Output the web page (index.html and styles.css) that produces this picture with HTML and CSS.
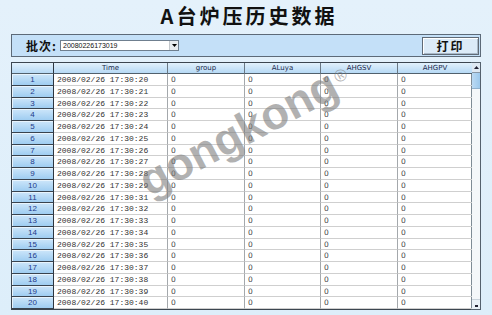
FILE: index.html
```html
<!DOCTYPE html>
<html>
<head>
<meta charset="utf-8">
<link rel="stylesheet" href="styles.css">
</head>
<body>
<div class="page">
  <h1 class="title">A台炉压历史数据</h1>
  <div class="toolbar">
    <span class="batch-label">批次:</span>
    <div class="select"><span class="select-text">20080226173019</span><span class="select-btn"><svg width="5" height="3" viewBox="0 0 5 3"><path d="M0 0H5L2.5 3Z" fill="#000"/></svg></span></div>
    <button class="print-btn">打印</button>
  </div>
  <div class="grid-wrap">
    <div class="grid" id="grid">
      <div class="hd rn"></div>
      <div class="hd">Time</div>
      <div class="hd">group</div>
      <div class="hd">ALuya</div>
      <div class="hd">AHGSV</div>
      <div class="hd">AHGPV</div>
    </div>
    <div class="scrollbar">
      <div class="sb-btn"><svg width="5" height="3" viewBox="0 0 5 3"><path d="M0 3H5L2.5 0Z" fill="#223"/></svg></div>
      <div class="sb-thumb"></div>
      <div class="sb-track"></div>
      <div class="sb-btn sb-bottom"><svg width="3" height="2" viewBox="0 0 3 2"><rect width="3" height="2" fill="#223"/></svg></div>
    </div>
  </div>
  <div class="watermark">gongkong<span class="reg">®</span></div>
</div>
<script>
  var g = document.getElementById('grid');
  var secs = [20,21,22,23,24,25,26,27,28,29,31,32,33,34,35,36,37,38,39,40];
  var html = '';
  for (var i = 1; i <= 20; i++) {
    html += '<div class="rn cell-rn">' + i + '</div>' +
      '<div class="cell mono">2008/02/26 17:30:' + secs[i - 1] + '</div>' +
      '<div class="cell">0</div><div class="cell">0</div><div class="cell">0</div><div class="cell">0</div>';
  }
  g.insertAdjacentHTML('beforeend', html);
</script>
</body>
</html>
```
FILE: styles.css
```css
* { box-sizing: border-box; }
html, body { margin: 0; padding: 0; }
body {
  width: 492px;
  height: 315px;
  overflow: hidden;
  background: linear-gradient(#e4f1fb, #ddeefa);
  font-family: "Liberation Sans", Arial, sans-serif;
}
.page {
  position: relative;
  width: 492px;
  height: 315px;
  padding: 0 11px;
}
.title {
  margin: 0;
  height: 34px;
  padding-top: 2px;
  padding-left: 6px;
  text-align: center;
  font-family: "Noto Sans CJK SC", sans-serif;
  font-weight: 600;
  font-size: 20px;
  line-height: 28px;
  letter-spacing: 3px;
  color: #111;
}
.toolbar {
  height: 23px;
  border: 1px solid #5d6a78;
  background: #c4e0f8;
  display: flex;
  align-items: center;
  padding-left: 14px;
  padding-right: 1px;
}
.batch-label {
  font-family: "Noto Sans CJK SC", sans-serif;
  font-weight: 700;
  font-size: 12px;
  color: #111;
  width: 34px;
  letter-spacing: 1px;
}
.select {
  width: 119px;
  height: 11px;
  border: 1px solid #6f7f8f;
  background: #fff;
  display: flex;
  align-items: center;
}
.select-text {
  flex: 1;
  font-size: 7px;
  padding-left: 2px;
  color: #111;
  line-height: 9px;
}
.select-btn {
  width: 9px;
  height: 9px;
  background: #e8ecf0;
  border-left: 1px solid #c4c8cc;
  display: flex;
  align-items: center;
  justify-content: center;
}
.print-btn {
  margin-left: auto;
  width: 57px;
  height: 18px;
  padding: 0;
  border: 1px solid #606a76;
  box-shadow: inset 1px 1px 0 #fff, inset -1px -1px 0 #a9b9c8;
  background: #dcebf8;
  font-family: "Noto Sans CJK SC", sans-serif;
  font-weight: 700;
  font-size: 12px;
  letter-spacing: 2px;
  line-height: 14px;
  color: #111;
}
.grid-wrap {
  margin-top: 5px;
  display: flex;
  height: 248px;
}
.grid {
  width: 461px;
  display: grid;
  grid-template-columns: 42px 114px 77px 76px 77px 75px;
  grid-template-rows: 11px;
  grid-auto-rows: 11.75px;
  border: 1px solid #3c4650;
  border-right: 1px solid #7e8b96;
  background: #fff;
  align-self: start;
}
.hd {
  background: linear-gradient(#e2f1fc, #b6d9f5);
  border-right: 1px solid #6a7884;
  border-bottom: 1px solid #51606c;
  font-family: "DejaVu Sans", sans-serif;
  font-size: 7px;
  line-height: 10px;
  text-align: center;
  color: #1b2a4a;
}
.rn {
  border-right: 1px solid #2d3640;
}
.cell-rn {
  background: linear-gradient(#cde6fa, #9fcdf1);
  border-bottom: 1px solid #39434e;
  box-shadow: inset 1px 1px 0 #e8f4fd;
  font-size: 8px;
  line-height: 11px;
  text-align: center;
  color: #1d3a8a;
}
.cell {
  border-right: 1px solid #a4a8ac;
  border-bottom: 1px solid #cfcfcf;
  font-family: "DejaVu Sans", sans-serif;
  font-size: 7.5px;
  line-height: 11px;
  padding-left: 3px;
  color: #444;
  white-space: nowrap;
  overflow: hidden;
}
.cell:nth-child(6n) { border-right: none; }
.mono {
  font-family: "Liberation Mono", monospace;
  font-size: 8px;
  color: #333;
}
.scrollbar {
  width: 9px;
  height: 248px;
  border: 1px solid #55616d;
  border-left: none;
  display: flex;
  flex-direction: column;
  background: #fff;
}
.sb-btn {
  height: 10px;
  background: #dfe9f3;
  border-bottom: 1px solid #8a98a6;
  display: flex;
  align-items: center;
  justify-content: center;
}
.sb-bottom {
  border-bottom: none;
  border-top: 1px solid #c9d3dc;
  background: #eaf1f7;
  align-items: flex-end;
  padding-bottom: 2px;
}
.sb-thumb {
  height: 16px;
  background: linear-gradient(90deg, #bcdaf3, #9cc8ec);
  border-bottom: 1px solid #8fb0cc;
}
.sb-track {
  flex: 1;
  background: #f4f7fa;
}
.watermark {
  position: absolute;
  left: 142px;
  top: 160px;
  font-family: "Liberation Sans", Arial, sans-serif;
  font-weight: 700;
  font-size: 45px;
  line-height: 44px;
  color: rgba(125, 125, 125, 0.6);
  transform: rotate(-28deg);
  transform-origin: left center;
  white-space: nowrap;
  pointer-events: none;
}
.reg {
  font-size: 17px;
  font-weight: 400;
  vertical-align: 12px;
  margin-left: 2px;
}
```
